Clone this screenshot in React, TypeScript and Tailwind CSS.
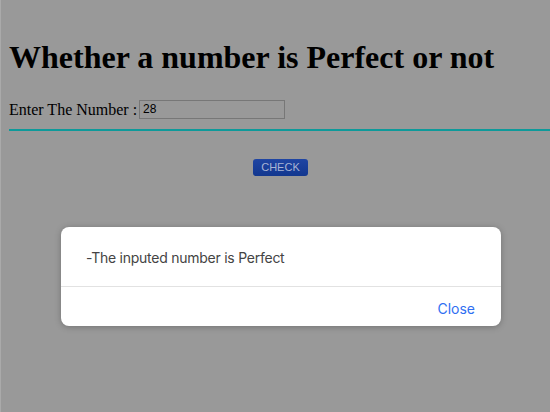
const App = () => {
  return (
    <div className="relative min-h-[412px] bg-[#999999] border-l border-[#aaaaaa] pl-[8px] font-['Liberation_Serif',serif] text-black">
      <div className="pt-[39px]">
        <h1 className="text-[32px] font-bold leading-[37px]">
          Whether a number is Perfect or not
        </h1>
        <div className="mt-[24px] flex items-center text-[16px] leading-[19px]">
          <span>Enter The Number :</span>
          <input
            readOnly
            value="28"
            className="ml-[2px] w-[146px] h-[19px] border border-[#777777] bg-transparent px-[3px] text-[12px] font-['Liberation_Sans',sans-serif] text-black outline-none"
          />
        </div>
        <hr className="mt-[10px] border-0 h-[2px] bg-[#0e9a9a]" />
        <div className="mt-[28px] flex justify-center">
          <button className="ml-[2px] w-[55px] h-[17px] rounded-[3px] bg-gradient-to-b from-[#1f45a3] to-[#12378f] text-[11px] leading-[17px] text-[#a9b5d5] font-['Liberation_Sans',sans-serif]">
            CHECK
          </button>
        </div>
      </div>

      <div className="absolute left-[60px] top-[227px] w-[440px] h-[99px] rounded-[8px] bg-white shadow-[0_1px_6px_rgba(0,0,0,0.25)] font-['Inter',sans-serif] flex flex-col">
        <div className="h-[59px] flex items-center pl-[25px] pt-[2px] text-[14px] tracking-[-0.25px] text-[#444444]">
          -The inputed number is Perfect
        </div>
        <div className="h-px bg-[#e2e2e2]" />
        <div className="flex-1 flex items-center justify-end pr-[26px] pt-[3px] text-[14px] text-[#2f6ff2]">
          Close
        </div>
      </div>
    </div>
  );
};

export default App;
